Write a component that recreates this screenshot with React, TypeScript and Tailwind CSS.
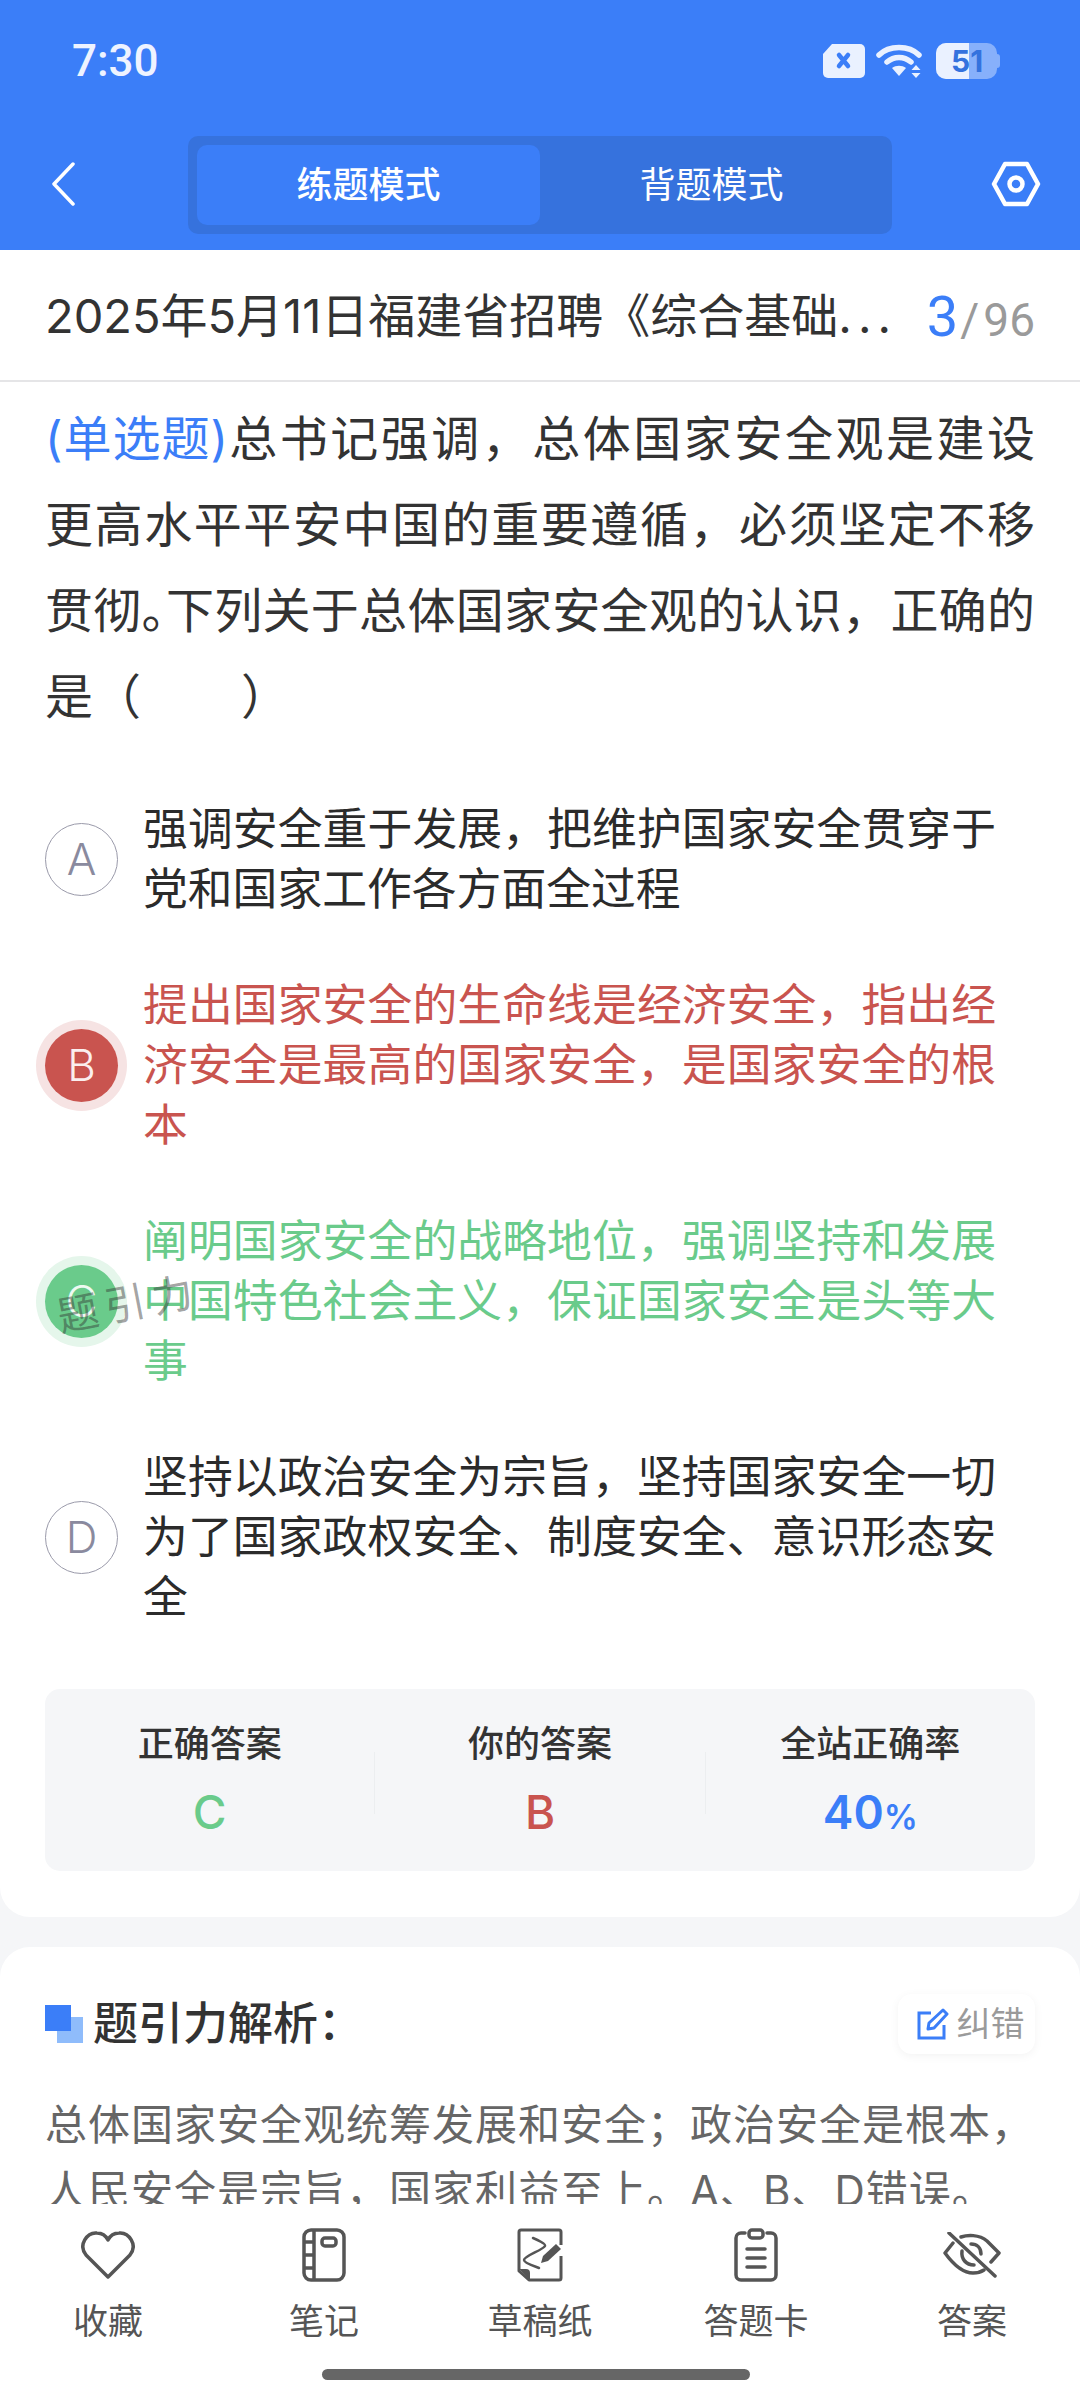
import React from 'react';

const cjk = "font-['Inter','Noto_Sans_CJK_SC',sans-serif]";

const options = [
  { key: 'A', text: '强调安全重于发展，把维护国家安全贯穿于党和国家工作各方面全过程', state: 'idle' },
  { key: 'B', text: '提出国家安全的生命线是经济安全，指出经济安全是最高的国家安全，是国家安全的根本', state: 'wrong' },
  { key: 'C', text: '阐明国家安全的战略地位，强调坚持和发展中国特色社会主义，保证国家安全是头等大事', state: 'right' },
  { key: 'D', text: '坚持以政治安全为宗旨，坚持国家安全一切为了国家政权安全、制度安全、意识形态安全', state: 'idle' },
];

function StatusBar() {
  return (
    <div className="flex h-[118px] items-center justify-between pl-[72px] pr-[80px] pt-[3px]">
      <span className="font-['Roboto',sans-serif] text-[44px] font-medium text-[#eef3ff]">7:30</span>
      <div className="flex items-center">
        <svg width="44" height="36" viewBox="0 0 44 36">
          <path d="M10 1h28a5 5 0 0 1 5 5v24a5 5 0 0 1-5 5H6a5 5 0 0 1-5-5V11z" fill="#eaf1ff" />
          <path d="M17 12l9 11M26 12l-9 11" stroke="#3b7ef8" strokeWidth="4.5" strokeLinecap="round" />
        </svg>
        <svg width="50" height="36" viewBox="0 0 50 36" className="ml-[10px]">
          <path d="M3 12C13 2 33 2 43 12M11 19c7-6 17-6 24 0" fill="none" stroke="#eaf1ff" strokeWidth="5.5" strokeLinecap="round" />
          <path d="M16 25c4-3 10-3 14 0l-7 8z" fill="#eaf1ff" />
          <path d="M40 22l4.500 5h-9zM40 35l4.500-5h-9z" fill="#eaf1ff" />
        </svg>
        <div className="relative ml-[10px] flex h-[36px] w-[61px] overflow-hidden rounded-[10px] bg-[#87b0fb]">
          <div className="w-[33px] bg-[#eaf1ff]" />
          <span className="absolute inset-0 pl-[15px] text-[30px] font-bold leading-[36px] text-[#3472de]">51</span>
        </div>
        <div className="h-[14px] w-[3px] rounded-r-full bg-[#87b0fb]" />
      </div>
    </div>
  );
}

function Header() {
  return (
    <div className="flex h-[132px] items-start bg-[#3b7ef8] pl-[50px] pt-[18px]">
      <svg width="26" height="44" viewBox="0 0 26 44" className="mt-[26px]">
        <path d="M23 2L4 22l19 20" fill="none" stroke="#fff" strokeWidth="3.500" strokeLinecap="round" strokeLinejoin="round" />
      </svg>
      <div className="ml-[112px] flex h-[98px] w-[704px] rounded-[10px] bg-[#3672dd] p-[9px]">
        <div className="flex h-[80px] w-[343px] items-center justify-center rounded-[10px] bg-[#3b7ef8] text-[36px] font-medium text-white">练题模式</div>
        <div className="flex h-[80px] flex-1 items-center justify-center text-[36px] text-white">背题模式</div>
      </div>
      <svg width="50" height="46" viewBox="0 0 50 46" className="ml-[99px] mt-[25px] shrink-0">
        <path d="M14 3h22l11 20-11 20H14L3 23z" fill="none" stroke="#fff" strokeWidth="4.500" strokeLinejoin="round" />
        <circle cx="25" cy="23" r="6.500" fill="none" stroke="#fff" strokeWidth="4.500" />
      </svg>
    </div>
  );
}

function OptionRow({ opt }: { opt: (typeof options)[number] }) {
  const textColor = opt.state === 'wrong' ? 'text-[#c9544f]' : opt.state === 'right' ? 'text-[#6acb8b]' : 'text-[#2b2b2b]';
  return (
    <div className="flex items-center">
      {opt.state === 'idle' && (
        <div className="ml-[45px] flex h-[73px] w-[73px] shrink-0 items-center justify-center rounded-full border-[1.5px] border-[#9a9aaa] text-[44px] font-light text-[#8a8a9e]">{opt.key}</div>
      )}
      {opt.state === 'wrong' && (
        <div className="ml-[45px] flex h-[73px] w-[73px] shrink-0 items-center justify-center rounded-full bg-[#c9544f] text-[44px] font-light text-[#fbeeee] shadow-[0_0_0_9px_#f6e3e3]">{opt.key}</div>
      )}
      {opt.state === 'right' && (
        <div className="ml-[45px] flex h-[73px] w-[73px] shrink-0 items-center justify-center rounded-full bg-[#6acb8b] text-[44px] font-light text-[#eefaf2] shadow-[0_0_0_9px_#e5f6eb]">{opt.key}</div>
      )}
      <p className={`ml-[25px] w-[853px] text-justify text-[44.8px] leading-[60px] ${textColor}`}>{opt.text}</p>
    </div>
  );
}

function Stat({ label, children }: { label: string; children: React.ReactNode }) {
  return (
    <div className="flex flex-1 flex-col items-center pt-[35px]">
      <span className="text-[36px] font-medium leading-[40px] text-[#333]">{label}</span>
      {children}
    </div>
  );
}

function BottomItem({ label, children }: { label: string; children: React.ReactNode }) {
  return (
    <div className="flex w-[216px] flex-col items-center">
      <div className="flex h-[62px] items-center justify-center">{children}</div>
      <span className="mt-[12px] text-[35px] leading-[46px] text-[#555]">{label}</span>
    </div>
  );
}

export default function App() {
  return (
    <div className={`relative flex h-[2400px] w-[1080px] flex-col overflow-hidden bg-[#f5f6f8] ${cjk}`}>
      <div className="bg-[#3b7ef8]">
        <StatusBar />
        <Header />
      </div>

      <div className="flex h-[132px] items-center justify-between border-b-2 border-[#e5e5e7] bg-white px-[45px] pt-[3px]">
        <span className="whitespace-nowrap text-[47px] text-[#333]">
          2025年5月11日福建省招聘《综合基础<span className="tracking-[6px]">...</span>
        </span>
        <span className="flex items-baseline whitespace-nowrap font-['Roboto',sans-serif]">
          <span className="text-[56px] text-[#3b7ef8]">3</span>
          <span className="ml-[2px] text-[46px] text-[#9a9a9a]">/</span>
          <span className="ml-[4px] text-[46px] text-[#9a9a9a]">96</span>
        </span>
      </div>

      <div className="relative min-h-0 flex-1 overflow-hidden">
        <div className="rounded-b-[30px] bg-white pb-[46px]">
          <div className="px-[45px] pt-[14px] text-[48px] leading-[86px] text-[#333]">
            <p className="whitespace-nowrap [text-align-last:justify]">
              <span className="tracking-[-1.5px] text-[#3b7ef8]">(单选题)</span>总书记强调，总体国家安全观是建设
            </p>
            <p className="whitespace-nowrap [text-align-last:justify]">更高水平平安中国的重要遵循，必须坚定不移</p>
            <p className="whitespace-nowrap [text-align-last:justify]">
              贯彻<span className="tracking-[-24px]">。</span>下列关于总体国家安全观的认识，正确的
            </p>
            <p className="whitespace-nowrap">
              是（<span className="inline-block w-[100px]" />）
            </p>
          </div>

          <div className="mt-[59px] flex flex-col gap-[56px]">
            {options.map((o) => (
              <OptionRow key={o.key} opt={o} />
            ))}
          </div>

          <div className="mx-[45px] mt-[62px] flex h-[182px] rounded-[15px] bg-[#f5f6f8]">
            <Stat label="正确答案">
              <span className="mt-[20px] text-[46px] font-medium leading-[56px] text-[#6acb8b]">C</span>
            </Stat>
            <div className="mt-[63px] h-[62px] w-px bg-[#eceef0]" />
            <Stat label="你的答案">
              <span className="mt-[20px] text-[46px] font-medium leading-[56px] text-[#c9544f]">B</span>
            </Stat>
            <div className="mt-[63px] h-[62px] w-px bg-[#eceef0]" />
            <Stat label="全站正确率">
              <span className="mt-[20px] text-[46px] font-semibold leading-[56px] text-[#3b7ef8]">
                40<span className="text-[34px]">%</span>
              </span>
            </Stat>
          </div>
        </div>

        <div className="mt-[30px] rounded-t-[30px] bg-white px-[45px] pt-[43px]">
          <div className="flex items-center justify-between">
            <div className="flex items-center">
              <svg width="38" height="38" viewBox="0 0 38 38">
                <rect x="12" y="12" width="26" height="26" fill="#8fbcfb" />
                <rect x="0" y="0" width="26" height="26" fill="#3b7ef8" />
              </svg>
              <span className="ml-[10px] text-[45px] font-medium text-[#333]">题引力解析：</span>
            </div>
            <div className="flex h-[60px] w-[137px] items-center justify-center gap-[8px] rounded-[14px] bg-white pl-[8px] text-[34px] text-[#9a9a9a] shadow-[0_2px_10px_rgba(0,0,0,0.05)]">
              <svg width="32" height="32" viewBox="0 0 32 32" fill="none" stroke="#3b7ef8" strokeWidth="3" className="shrink-0">
                <path d="M14 5H2v25h25V17" />
                <path d="M26 2l4 4-13 14-6 1 1-6z" strokeLinejoin="round" />
              </svg>
              <span className="whitespace-nowrap">纠错</span>
            </div>
          </div>
          <p className="mt-[34px] text-[42px] leading-[66px] tracking-[1px] text-[#666]">
            总体国家安全观统筹发展和安全；政治安全是根本，人民安全是宗旨，国家利益至上。A、B、D错误。
          </p>
        </div>

        {/* watermark */}
        <span className="absolute left-[58px] top-[905px] origin-left rotate-[-11deg] whitespace-nowrap text-[41px] tracking-[7px] text-[rgba(50,50,50,0.45)]">题引力</span>
      </div>

      <div className="relative flex h-[196px] flex-col bg-white">
        <div className="flex pt-[20px]">
          <BottomItem label="收藏">
            <svg width="54" height="50" viewBox="0 0 54 50" fill="none" stroke="#555" strokeWidth="3.500" strokeLinejoin="round">
              <path d="M27 47L5 25C-3 15 6 2 16 3c5 0 9 3 11 7 2-4 6-7 11-7 10-1 19 12 11 22z" />
            </svg>
          </BottomItem>
          <BottomItem label="笔记">
            <svg width="44" height="54" viewBox="0 0 44 54" fill="none" stroke="#555" strokeWidth="3.500">
              <rect x="2" y="2" width="40" height="50" rx="7" />
              <path d="M12 2v50M2 14h10M2 27h10M2 40h10" />
              <rect x="20" y="10" width="14" height="8" rx="3" />
            </svg>
          </BottomItem>
          <BottomItem label="草稿纸">
            <svg width="46" height="54" viewBox="0 0 46 54" fill="none" stroke="#555" strokeWidth="3">
              <path d="M44 17V4a2 2 0 0 0-2-2H4a2 2 0 0 0-2 2v39l10 9h30a2 2 0 0 0 2-2V28" strokeLinejoin="round" />
              <path d="M2 41h7a4 4 0 0 1 4 4v7z" fill="#555" stroke="none" />
              <path d="M16 10c5 2 13 6 12 8-2 4-21 10-21 14 0 3 10 6 15 8" strokeLinecap="round" strokeWidth="2.500" />
              <path d="M39 16l5 5-13 12-7 2 2-7z" fill="#555" stroke="none" />
            </svg>
          </BottomItem>
          <BottomItem label="答题卡">
            <svg width="44" height="54" viewBox="0 0 44 54" fill="none" stroke="#555" strokeWidth="3.500" strokeLinecap="round">
              <path d="M11 5H7a5 5 0 0 0-5 5v37a5 5 0 0 0 5 5h30a5 5 0 0 0 5-5V10a5 5 0 0 0-5-5h-4" />
              <rect x="15" y="2" width="14" height="8" rx="3" />
              <path d="M13 21h18M13 30h18M13 39h18" />
            </svg>
          </BottomItem>
          <BottomItem label="答案">
            <svg width="58" height="46" viewBox="0 0 58 46" fill="none" stroke="#555" strokeWidth="3.500" strokeLinecap="round" strokeLinejoin="round">
              <path d="M18 5C24 3 36 2 44 9L56 21 48 30" />
              <path d="M10 11L2 21C10 32 20 41 30 41 34 41 38 40 41 38" />
              <path d="M6 1L52 44" />
              <path d="M19 19C18 27 23 33 31 33" />
              <path d="M28 12C34 12 38 16 38 22" />
            </svg>
          </BottomItem>
        </div>
        <div className="absolute bottom-[20px] left-[322px] h-[11px] w-[428px] rounded-full bg-[#666]" />
      </div>
    </div>
  );
}
